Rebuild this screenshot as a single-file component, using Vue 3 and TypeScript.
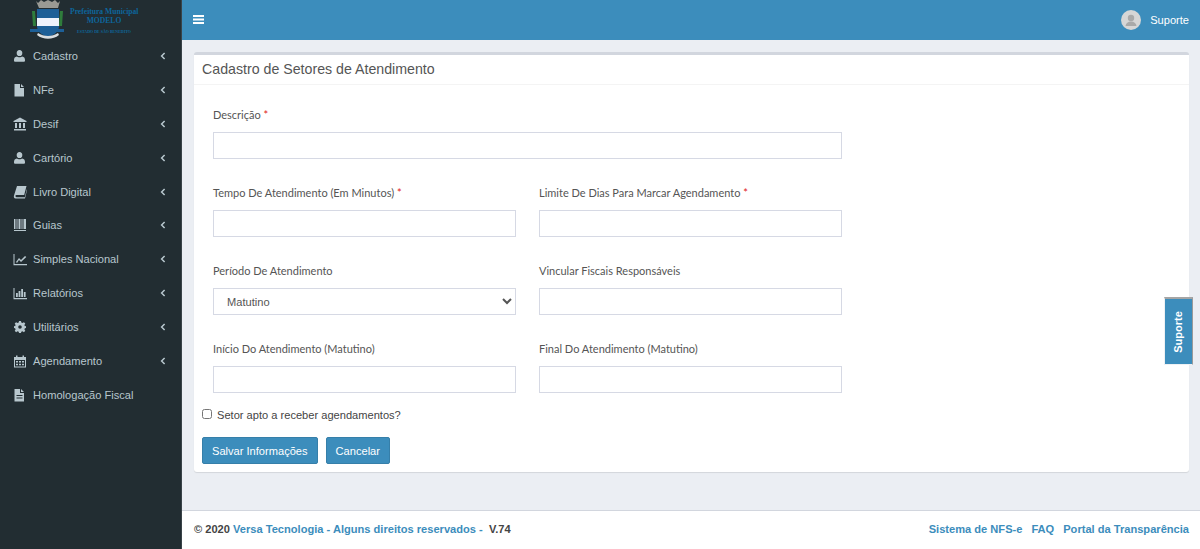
<template>
  <div class="page">
    <aside class="sidebar">
      <div class="logo">
        <svg class="crest" width="36" height="40" viewBox="0 0 36 40">
          <path d="M6 1l2 2 3-3 3 2 4-2 4 2 3-2 3 3 2-2-2 7H9z" fill="#9a9a94" />
          <path d="M2 11h3l1 15H3zM30 11h3l-1 15h-3z" fill="#2f7d3c" />
          <path d="M0 29h34v3H0z" fill="#1d5f97" />
          <path d="M7 9h22v17c0 6-5 9-11 11-6-2-11-5-11-11z" fill="#1d5f97" />
          <path d="M7 18h22v8H7z" fill="#eef2fb" />
          <path d="M8 33c6 4 14 4 20 0l1 2c-6 5-16 5-22 0z" fill="#d8dde0" />
        </svg>
        <div class="logo-text">
          <div>Prefeitura Municipal</div>
          <div>MODELO</div>
          <div class="logo-small">ESTADO DE SÃO BENEDITO</div>
        </div>
      </div>
      <nav>
        <a v-for="item in menu" :key="item.label" class="menu-item">
          <svg class="menu-icon" width="14" height="14" viewBox="0 0 14 14">
            <path :d="icons[item.icon]" fill="currentColor" fill-rule="evenodd" />
          </svg>
          <span class="menu-label">{{ item.label }}</span>
          <svg v-if="item.arrow" class="arrow" width="6" height="8" viewBox="0 0 6 8">
            <path d="M4.6 1L1.6 4l3 3" fill="none" stroke="currentColor" stroke-width="1.5" />
          </svg>
        </a>
      </nav>
    </aside>

    <div class="main">
      <header class="topbar">
        <svg class="burger" width="11" height="9" viewBox="0 0 11 9">
          <path d="M0 0h11v2H0zM0 3.5h11v2H0zM0 7h11v2H0z" fill="#fff" />
        </svg>
        <div class="user">
          <svg width="20" height="20" viewBox="0 0 20 20">
            <circle cx="10" cy="10" r="10" fill="#d6d6d6" />
            <circle cx="10" cy="8" r="3.2" fill="#a9a9a9" />
            <path d="M4.5 16c.5-3 2.5-4.5 5.5-4.5s5 1.500 5.500 4.500z" fill="#a9a9a9" />
          </svg>
          <span>Suporte</span>
        </div>
      </header>

      <main class="content">
        <section class="card">
          <h1 class="card-title">Cadastro de Setores de Atendimento</h1>
          <form class="card-body" @submit.prevent>
            <div class="fields">
              <div class="field full">
                <label>Descrição <b>*</b></label>
                <input type="text" />
              </div>
              <div class="field">
                <label>Tempo De Atendimento (Em Minutos) <b>*</b></label>
                <input type="text" />
              </div>
              <div class="field">
                <label>Limite De Dias Para Marcar Agendamento <b>*</b></label>
                <input type="text" />
              </div>
              <div class="field">
                <label>Período De Atendimento</label>
                <select v-model="periodo">
                  <option>Matutino</option>
                  <option>Vespertino</option>
                </select>
              </div>
              <div class="field">
                <label>Vincular Fiscais Responsáveis</label>
                <input type="text" />
              </div>
              <div class="field">
                <label>Início Do Atendimento (Matutino)</label>
                <input type="text" />
              </div>
              <div class="field">
                <label>Final Do Atendimento (Matutino)</label>
                <input type="text" />
              </div>
            </div>
            <label class="check">
              <input type="checkbox" />
              <span>Setor apto a receber agendamentos?</span>
            </label>
            <div class="actions">
              <button type="submit">Salvar Informações</button>
              <button type="button">Cancelar</button>
            </div>
          </form>
        </section>
      </main>

      <footer class="footer">
        <div>
          © 2020 <a>Versa Tecnologia - Alguns direitos reservados - </a>&nbsp;V.74
        </div>
        <div class="footer-links">
          <a>Sistema de NFS-e</a>
          <a>FAQ</a>
          <a>Portal da Transparência</a>
        </div>
      </footer>
    </div>

    <div class="support-tab"><span>Suporte</span></div>
  </div>
</template>

<script setup lang="ts">
import { ref } from "vue";

const periodo = ref<string>("Matutino");

const icons: Record<string, string> = {
  user: "M6.5 1a2.8 2.8 0 0 1 2.8 3.2 2.8 2.8 0 0 1-5.6 0A2.8 2.8 0 0 1 6.5 1zM3.8 7.5c1 1 4.4 1 5.4 0 1.8.3 2.8 1.5 2.8 3.5v.8a1 1 0 0 1-1 1H2a1 1 0 0 1-1-1V11c0-2 1-3.2 2.8-3.5z",
  file: "M1.5 1H7v4h4v8.500H1.5zM8 1l3 3H8z",
  bank: "M7 .5L13.5 4v1H.5V4zM2 6h2v5H2zM6 6h2v5H6zM10 6h2v5h-2zM1 12h12v1.5H1z",
  book: "M4 1h9.5l-2.3 9H3.5a1.1 1.1 0 0 0 0 2.2h8.3l2-8 .2.8-2 8.5H2.5C1 13.5.5 12 1 10.500z",
  barcode: "M1 1h1.5v10H1zM3.5 1h1v10h-1zM5.5 1h2v10h-2zM8.5 1h1v10h-1zM10.5 1H13v10h-2.5zM1 12h12v1H1z",
  line: "M.5 2h1v10H14v1.2H.5zM3 10l3-4 2 2 4-4 1.3 1-5.3 5-2-2-2 3z",
  bars: "M.5 2h1v10H14v1.2H.5zM3 7h1.8v4H3zM5.6 5h1.8v6H5.6zM8.2 3H10v8H8.2zM10.8 6h1.8v5h-1.8z",
  gear: "M6 1h2l.3 1.6 1.2.5 1.4-.9 1.4 1.4-.9 1.4.5 1.2L13 6v2l-1.100.2-.5 1.2.9 1.4-1.4 1.4-1.4-.9-1.2.5L8 13H6l-.3-1.2-1.2-.5-1.4.9-1.4-1.4.9-1.4-.5-1.2L1 8V6l1.100.2.5-1.2-.9-1.4 1.4-1.4 1.4.9 1.2-.5zM7 5.200a1.800 1.800 0 1 0 0 3.600 1.800 1.800 0 0 0 0-3.600z",
  calendar: "M1 3h2V1.5h1.5V3h5V1.5H11V3h2v10.5H1zM2 6v6.5h10V6zM3 7h2v1.5H3zM6 7h2v1.5H6zM9 7h2v1.5H9zM3 9.7h2v1.5H3zM6 9.7h2v1.5H6zM9 9.7h2v1.5H9z",
  doc: "M1.5 1H7v4h4v8.5H1.5zM8 1l3 3H8zM3.5 7v1h6V7zM3.5 9.5v1h6v-1z",
};

const menu = [
  { label: "Cadastro", icon: "user", arrow: true },
  { label: "NFe", icon: "file", arrow: true },
  { label: "Desif", icon: "bank", arrow: true },
  { label: "Cartório", icon: "user", arrow: true },
  { label: "Livro Digital", icon: "book", arrow: true },
  { label: "Guias", icon: "barcode", arrow: true },
  { label: "Simples Nacional", icon: "line", arrow: true },
  { label: "Relatórios", icon: "bars", arrow: true },
  { label: "Utilitários", icon: "gear", arrow: true },
  { label: "Agendamento", icon: "calendar", arrow: true },
  { label: "Homologação Fiscal", icon: "doc", arrow: false },
];
</script>

<style>
html, body {
  margin: 0;
  height: 100%;
  overflow: hidden;
}
</style>

<style scoped>
.page {
  position: relative;
  display: flex;
  width: 1200px;
  height: 549px;
  overflow: hidden;
  font-family: "Liberation Sans", Arial, sans-serif;
  font-size: 11px;
  color: #444;
}

.sidebar {
  width: 181px;
  flex-shrink: 0;
  background: #222d32;
  border-right: 1px solid #3a4348;
  color: #b8c7ce;
}
.logo {
  display: flex;
  align-items: flex-start;
  height: 39px;
  overflow: hidden;
}
.crest {
  margin-left: 30px;
  flex-shrink: 0;
}
.logo-text {
  margin-left: 4px;
  padding-top: 7px;
  width: 68px;
  text-align: center;
  font-family: "Liberation Serif", serif;
  font-weight: bold;
  font-size: 7.6px;
  line-height: 9px;
  white-space: nowrap;
  color: #0d669c;
}
.logo-small {
  margin-top: 2px;
  font-size: 4px;
  line-height: 9px;
}
.menu-item {
  display: flex;
  align-items: center;
  height: 33.9px;
  padding-left: 13px;
}
.menu-icon {
  flex-shrink: 0;
}
.menu-label {
  margin-left: 6px;
  font-size: 11.1px;
}
.arrow {
  margin-left: auto;
  margin-right: 15px;
}

.main {
  flex: 1;
  display: flex;
  flex-direction: column;
  min-width: 0;
  background: #ebeef3;
}
.topbar {
  height: 40px;
  flex-shrink: 0;
  display: flex;
  align-items: center;
  justify-content: space-between;
  padding: 0 11px;
  background: #3c8dbc;
  color: #fff;
}
.burger {
  margin-bottom: 2px;
}
.user {
  display: flex;
  align-items: center;
  gap: 9px;
  font-size: 11.1px;
}

.content {
  flex: 1;
  padding: 12px 11px 0 12px;
}
.card {
  height: 420px;
  box-sizing: border-box;
  background: #fff;
  border-top: 3px solid #d2d6de;
  border-radius: 3px;
  box-shadow: 0 1px 1px rgba(0, 0, 0, 0.1);
}
.card-title {
  margin: 0;
  height: 29px;
  padding-left: 8px;
  border-bottom: 1px solid #f4f4f4;
  font-size: 14.2px;
  font-weight: normal;
  line-height: 28px;
  color: #555;
}
.card-body {
  padding: 0 8px;
}
.fields {
  display: grid;
  grid-template-columns: 303px 303px;
  column-gap: 23px;
  padding: 21px 0 0 11px;
}
.field {
  display: flex;
  flex-direction: column;
  height: 78px;
}
.field.full {
  grid-column: 1 / 3;
}
.field label {
  height: 24px;
  padding-top: 2px;
  font-family: "Lato", sans-serif;
  font-size: 11px;
  line-height: 14px;
  color: #555;
}
.field b {
  color: #e02020;
  font-weight: normal;
}
.field input,
.field select {
  box-sizing: border-box;
  height: 27px;
  width: 100%;
  margin: 0;
  border: 1px solid #d6d9e4;
  border-radius: 0;
  background: #fff;
  font-family: "Liberation Sans", Arial, sans-serif;
  font-size: 11.1px;
  color: #555;
  outline: none;
}
.field select {
  padding-left: 9px;
}
.check {
  display: flex;
  align-items: center;
  gap: 5px;
  height: 14px;
  margin-top: -10px;
  font-size: 11.1px;
  color: #444;
}
.check input {
  width: 10px;
  height: 10px;
  margin: 0 0 2px;
}
.actions {
  display: flex;
  gap: 8px;
  margin-top: 15px;
}
.actions button {
  height: 27px;
  padding: 0 9px;
  border: 1px solid #367fa9;
  border-radius: 2px;
  background: #3c8dbc;
  color: #fff;
  font-family: "Liberation Sans", Arial, sans-serif;
  font-size: 11.1px;
}

.footer {
  height: 39px;
  flex-shrink: 0;
  box-sizing: border-box;
  display: flex;
  align-items: center;
  justify-content: space-between;
  padding: 0 11px 3px 12px;
  background: #fff;
  border-top: 1px solid #d2d6de;
  font-size: 11.1px;
  font-weight: bold;
  color: #444;
}
.footer a {
  color: #3c8dbc;
}
.footer-links {
  display: flex;
  gap: 9px;
}

.support-tab {
  position: absolute;
  left: 1164px;
  top: 297px;
  box-sizing: border-box;
  width: 29px;
  height: 68px;
  display: flex;
  align-items: center;
  justify-content: center;
  padding-right: 2px;
  background: #3c8dbc;
  border-top: 2px solid #a5a5a5;
  border-right: 1px solid #9a9a9a;
  border-left: 1px solid #eef1f4;
  border-bottom: 1px solid #eef1f4;
  color: #fff;
  font-size: 11px;
  font-weight: bold;
}
.support-tab span {
  transform: rotate(-90deg);
}
</style>
